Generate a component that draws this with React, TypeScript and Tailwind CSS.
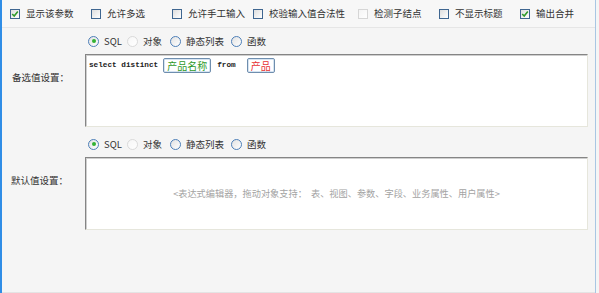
import React from "react";

const CJK = { fontFamily: '"Noto Sans CJK SC", "Noto Sans", sans-serif' };

function CheckBox(props: { checked?: boolean; disabled?: boolean }) {
  return (
    <span
      className={
        "relative flex h-[10px] w-[10px] shrink-0 items-center justify-center border bg-gradient-to-br from-[#dedede] to-white " +
        (props.disabled ? "border-[#d6d6d6] from-[#f4f4f4]" : "border-[#3f6690]")
      }
    >
      {props.checked && (
        <svg width="8" height="8" viewBox="0 0 8 8">
          <path d="M1.2 4 L3.2 6 L6.8 1.6" fill="none" stroke="#2f9a2a" strokeWidth="1.6" />
        </svg>
      )}
    </span>
  );
}

function Radio(props: { checked?: boolean; disabled?: boolean }) {
  return (
    <span
      className={
        "flex h-[11px] w-[11px] shrink-0 items-center justify-center rounded-full border bg-gradient-to-br from-[#e2e2e2] to-white " +
        (props.disabled ? "border-[#dadada] from-[#f6f6f6]" : "border-[#4d7fb8]")
      }
    >
      {props.checked && <span className="h-[4px] w-[4px] rounded-full bg-[#33b233]" />}
    </span>
  );
}

function RadioRow() {
  const items = [
    { label: "SQL", checked: true, w: "w-[39px]" },
    { label: "对象", disabled: true, w: "w-[43px]" },
    { label: "静态列表", w: "w-[61px]" },
    { label: "函数", w: "w-[40px]" },
  ];
  return (
    <div className="flex h-[26px] items-center pl-[3px]">
      {items.map((item, i) => (
        <div key={i} className={"flex items-center gap-[5px] " + item.w}>
          <Radio checked={item.checked} disabled={item.disabled} />
          <span className="text-[9.5px] text-[#333]">{item.label}</span>
        </div>
      ))}
    </div>
  );
}

function Tag(props: { text: string; color: string }) {
  return (
    <span
      className={
        "flex h-[15px] items-center rounded-[2px] border border-[#6f8eae] bg-white px-[3px] text-[10px] leading-none shadow-[inset_0_0_0_1px_#d6e4f2] " +
        props.color
      }
    >
      {props.text}
    </span>
  );
}

const editorBox =
  "h-[73px] w-[503px] border border-t-[#858585] border-l-[#858585] border-r-[#e6e6dc] border-b-[#e6e6dc] bg-white shadow-[inset_1px_1px_0_#cfcfcf]";

export default function App() {
  const topItems = [
    { label: "显示该参数", checked: true, w: "w-[81px]" },
    { label: "允许多选", w: "w-[81px]" },
    { label: "允许手工输入", w: "w-[81px]" },
    { label: "校验输入值合法性", w: "w-[105px]" },
    { label: "检测子结点", disabled: true, w: "w-[81px]" },
    { label: "不显示标题", w: "w-[81px]" },
    { label: "输出合并", checked: true, w: "w-[70px]" },
  ];

  return (
    <div className="flex h-[293px] w-[599px] border-l-2 border-l-[#2f8de6] bg-[#f5f5f5] pr-[3px]" style={CJK}>
      <div className="flex flex-1 flex-col border-r border-r-[#a9c6e3]">
        {/* checkbox options */}
        <div className="flex h-[28px] items-center border-b border-b-[#e6e6e6] bg-[#f7f7f7] pl-[8px]">
          {topItems.map((item, i) => (
            <div key={i} className={"flex items-center gap-[6px] " + item.w}>
              <CheckBox checked={item.checked} disabled={item.disabled} />
              <span className="whitespace-nowrap text-[9.5px] text-[#333]">{item.label}</span>
            </div>
          ))}
        </div>

        {/* candidate values */}
        <div className="flex pb-[4px]">
          <div className="flex w-[83px] items-center pl-[10px] text-[9.5px] text-[#333]">备选值设置：</div>
          <div className="flex flex-col">
            <RadioRow />
            <div className={editorBox}>
              <div className="flex items-center pl-[3px] pt-[3px]">
                <span
                  className="text-[7.7px] font-bold text-[#222]"
                  style={{ fontFamily: '"Liberation Mono", monospace' }}
                >
                  select distinct
                </span>
                <span className="ml-[5px]">
                  <Tag text="产品名称" color="text-[#2f9a2a]" />
                </span>
                <span
                  className="ml-[6px] text-[7.7px] font-bold text-[#222]"
                  style={{ fontFamily: '"Liberation Mono", monospace' }}
                >
                  from
                </span>
                <span className="ml-[11px]">
                  <Tag text="产品" color="text-[#e83232]" />
                </span>
              </div>
            </div>
          </div>
        </div>

        {/* default value */}
        <div className="flex pb-[4px]">
          <div className="flex w-[83px] items-center pl-[9px] text-[9.5px] text-[#333]">默认值设置：</div>
          <div className="flex flex-col">
            <RadioRow />
            <div className={editorBox + " flex items-center justify-center"}>
              <span className="whitespace-nowrap text-[9.2px] text-[#a3a3a3]">
                &lt;表达式编辑器，拖动对象支持：&nbsp;&nbsp;表、视图、参数、字段、业务属性、用户属性&gt;
              </span>
            </div>
          </div>
        </div>

        <div className="flex-1 border-b border-b-[#e4e4e4]" />
      </div>
    </div>
  );
}
